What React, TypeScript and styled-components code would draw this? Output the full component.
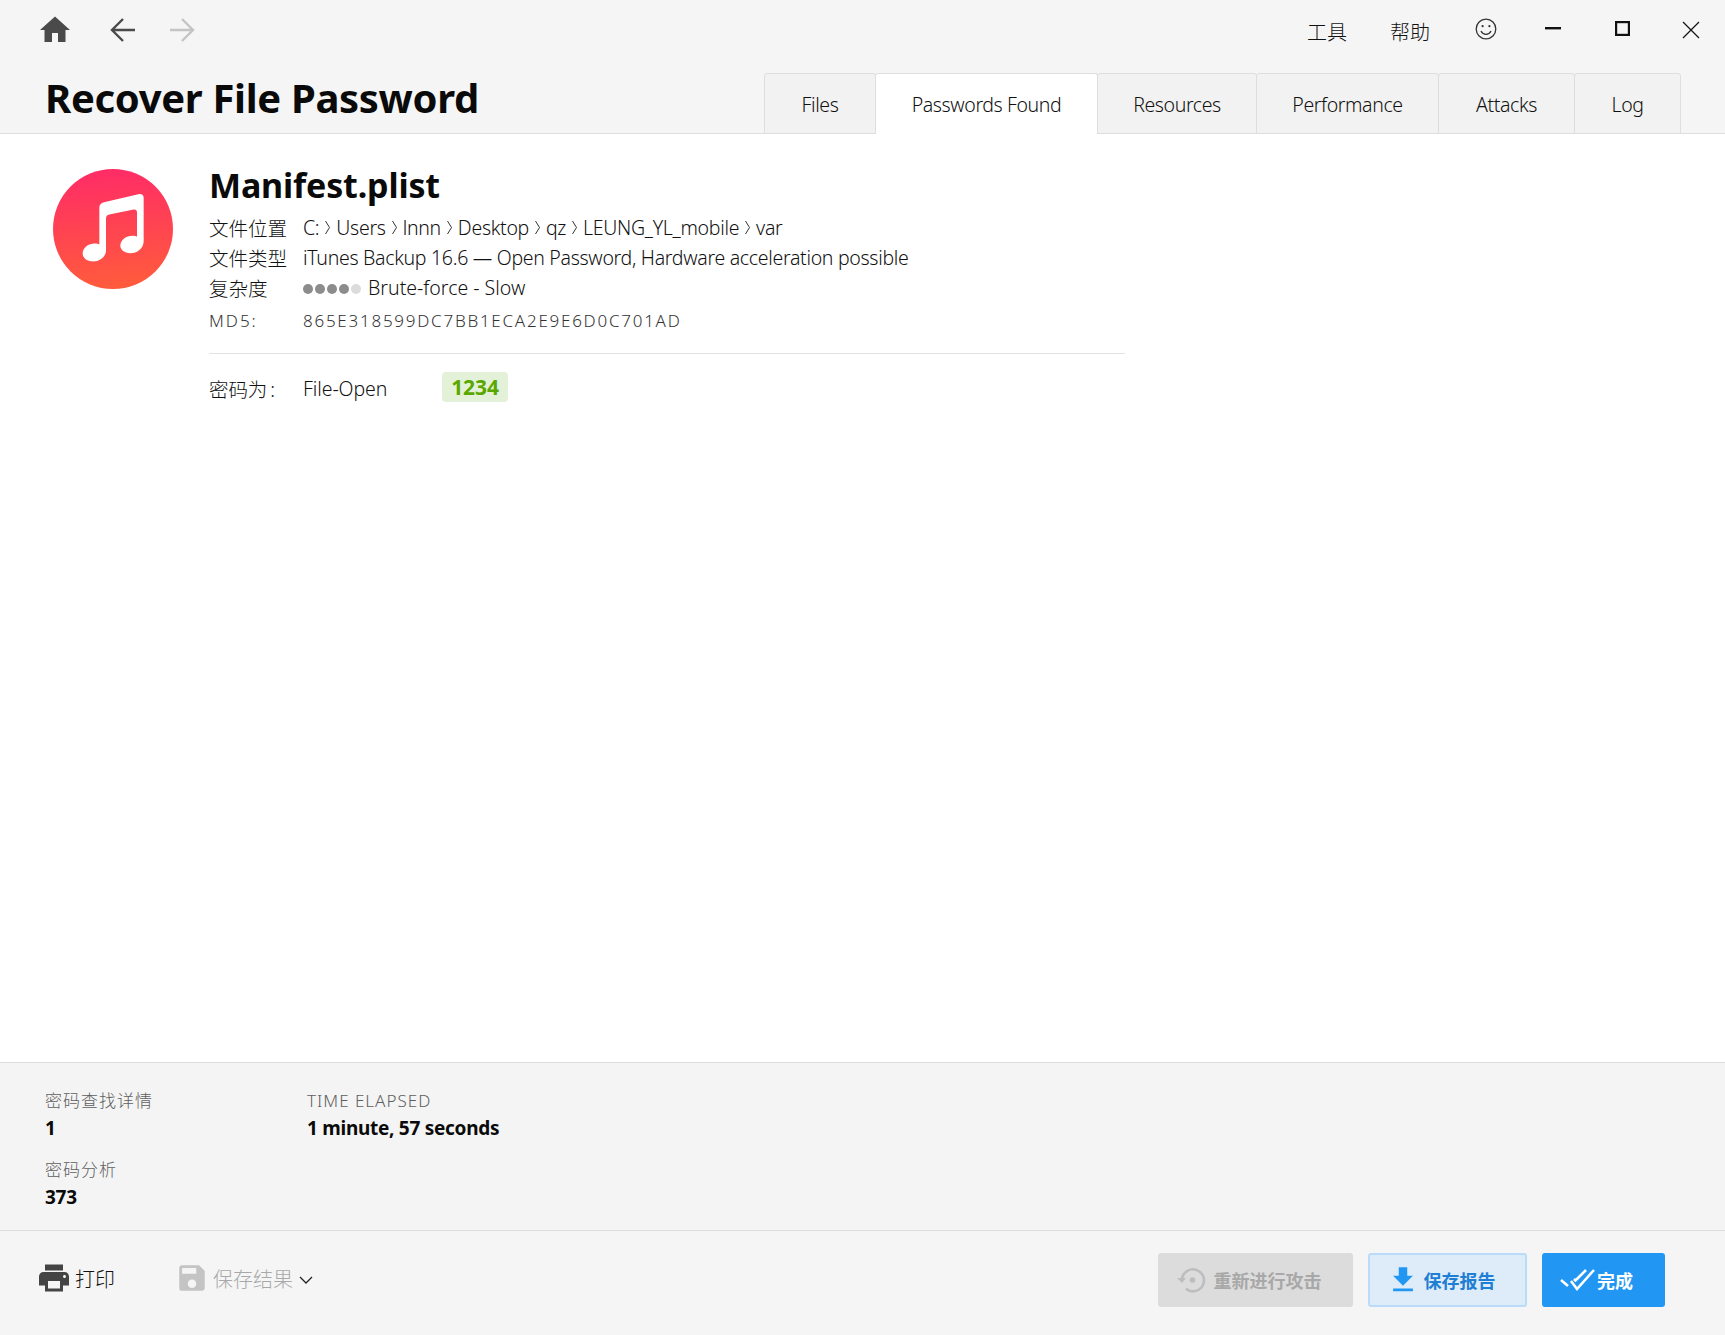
import { createGlobalStyle, styled } from "styled-components";
import { MdFileDownload, MdHome, MdPrint, MdSave } from "react-icons/md";

const GlobalStyle = createGlobalStyle`
    html, body {
        margin: 0;
        padding: 0;
        background: #fff;
    }
    body {
        font-family: "Noto Sans", "Noto Sans CJK SC", sans-serif;
        color: #1a1a1a;
    }
`;

const Page = styled.div`
    width: 1725px;
    height: 1335px;
    display: flex;
    flex-direction: column;
    overflow: hidden;
`;

const Header = styled.header`
    height: 134px;
    box-sizing: border-box;
    background: #f5f5f5;
    border-bottom: 1px solid #dedede;
    display: flex;
    flex-direction: column;
    flex: none;
`;

const TopBar = styled.div`
    height: 72px;
    flex: none;
    display: flex;
    align-items: center;
    padding: 0 25px 12px 40px;
    box-sizing: border-box;
`;

const NavGroup = styled.div`
    display: flex;
    align-items: center;
    flex: 1;
`;

const NavButton = styled.div<{ $gap?: number; $muted?: boolean }>`
    display: flex;
    margin-left: ${(p) => p.$gap ?? 0}px;
    color: ${(p) => (p.$muted ? "#c4c4c4" : "#4a4a4a")};
`;

const MenuItem = styled.span<{ $width: number }>`
    width: ${(p) => p.$width}px;
    font-size: 20px;
    font-weight: 300;
    color: #111;
    margin-top: 2px;
`;

const WindowButton = styled.div<{ $width: number; $lift?: number }>`
    width: ${(p) => p.$width}px;
    display: flex;
    color: #111;
    margin-bottom: ${(p) => p.$lift ?? 0}px;
`;

const TitleRow = styled.div`
    flex: 1;
    display: flex;
    align-items: flex-end;
    justify-content: space-between;
    padding: 0 45px 0 45px;
`;

const PageTitle = styled.h1`
    margin: 0 0 11px;
    font-size: 40px;
    line-height: 48px;
    font-weight: 700;
    color: #0a0a0a;
    letter-spacing: -0.32px;
`;

const Tabs = styled.nav`
    display: flex;
    height: 61px;
    margin-bottom: -1px;
`;

const Tab = styled.div<{ $width: number; $active?: boolean }>`
    width: ${(p) => p.$width}px;
    box-sizing: border-box;
    display: flex;
    align-items: center;
    justify-content: center;
    padding-top: 1px;
    font-size: 19.5px;
    font-weight: 300;
    letter-spacing: -0.4px;
    color: #111;
    background: ${(p) => (p.$active ? "#fff" : "#f2f2f2")};
    border: 1px solid #dedede;
    border-bottom: ${(p) => (p.$active ? "none" : "1px solid #dedede")};
    border-radius: 3px 3px 0 0;
    margin-right: -1px;
    position: relative;
    z-index: ${(p) => (p.$active ? 1 : 0)};
`;

const Content = styled.main`
    flex: 1;
    background: #fff;
    display: flex;
    gap: 36px;
    padding: 35px 0 0 53px;
`;

const AppIcon = styled.div`
    width: 120px;
    height: 120px;
    border-radius: 50%;
    background: linear-gradient(175deg, #ff2a68 0%, #ff5e3a 100%);
    display: flex;
    align-items: center;
    justify-content: center;
    flex: none;
`;

const Details = styled.section`
    width: 916px;
    margin-top: -5px;
`;

const FileName = styled.h2`
    margin: 0 0 6px;
    font-size: 34px;
    line-height: 42px;
    font-weight: 700;
    color: #0a0a0a;
    letter-spacing: -0.16px;
`;

const InfoRow = styled.div`
    display: grid;
    grid-template-columns: 94px 1fr;
    align-items: center;
    height: 30px;
    font-size: 19.5px;
    font-weight: 300;
    color: #111;
    letter-spacing: -0.3px;
`;

const InfoLabel = styled.span`
    letter-spacing: 0;
`;

const Crumb = styled.span`
    display: inline-flex;
    align-items: center;
    gap: 6px;
`;

const Complexity = styled.span`
    letter-spacing: 0;
`;

const Dots = styled.span`
    display: inline-flex;
    gap: 2px;
    margin-right: 7px;
    vertical-align: 1px;
`;

const Dot = styled.i<{ $on: boolean }>`
    width: 10px;
    height: 10px;
    border-radius: 50%;
    background: ${(p) => (p.$on ? "#8c8c8c" : "#dcdcdc")};
`;

const HashRow = styled(InfoRow)`
    font-size: 17px;
    letter-spacing: 1.75px;
    color: #333;
    margin-top: 3px;
`;

const HashLabel = styled.span`
    letter-spacing: 2px;
`;

const Divider = styled.hr`
    border: none;
    border-top: 1px solid #e2e2e2;
    margin: 18px 0 17px;
`;

const PasswordRow = styled.div`
    display: grid;
    grid-template-columns: 94px 139px auto;
    justify-content: start;
    align-items: center;
    height: 30px;
    font-size: 19.5px;
    font-weight: 300;
    color: #111;
    letter-spacing: -0.08px;
`;

const PasswordText = styled.span`
    padding-top: 3px;
`;

const Colon = styled.span`
    margin-left: 3px;
`;

const PasswordBadge = styled.span`
    width: 66px;
    height: 30px;
    border-radius: 4px;
    background: #e4f1d9;
    color: #5aa700;
    font-weight: 700;
    font-size: 21px;
    display: flex;
    align-items: center;
    justify-content: center;
`;

const Stats = styled.section`
    height: 169px;
    flex: none;
    box-sizing: border-box;
    background: #f4f4f4;
    border-top: 1px solid #dedede;
    border-bottom: 1px solid #dedede;
    padding: 23px 45px 0;
    display: grid;
    grid-template-columns: 262px 1fr;
    grid-auto-rows: 69px;
`;

const Stat = styled.div`
    display: flex;
    flex-direction: column;
`;

const StatLabel = styled.span`
    height: 29px;
    line-height: 30px;
    font-size: 17px;
    font-weight: 300;
    color: #5e5e5e;
    letter-spacing: 1px;
`;

const StatValue = styled.span`
    line-height: 26px;
    font-size: 19px;
    font-weight: 700;
    color: #0a0a0a;
    letter-spacing: -0.28px;
`;

const ActionBar = styled.footer`
    height: 104px;
    flex: none;
    box-sizing: border-box;
    background: #f5f5f5;
    display: flex;
    align-items: center;
    padding: 0 60px 6px 36px;
`;

const TextAction = styled.div<{ $disabled?: boolean; $gap?: number; $iconGap: number }>`
    display: flex;
    align-items: center;
    gap: ${(p) => p.$iconGap}px;
    margin-left: ${(p) => p.$gap ?? 0}px;
    margin-bottom: 4px;
    font-size: 20px;
    font-weight: 300;
    color: ${(p) => (p.$disabled ? "#a8a8a8" : "#111")};

    svg {
        color: ${(p) => (p.$disabled ? "#c4c4c4" : "#444")};
    }
`;

const Chevron = styled.svg`
    margin-left: 2px;
    margin-top: 3px;
`;

const ButtonGroup = styled.div`
    margin-left: auto;
    display: flex;
    gap: 15px;
`;

const Button = styled.div<{ $kind: "disabled" | "outline" | "primary"; $width: number; $gap: number }>`
    width: ${(p) => p.$width}px;
    height: 54px;
    box-sizing: border-box;
    border-radius: 3px;
    display: flex;
    align-items: center;
    justify-content: center;
    gap: ${(p) => p.$gap}px;
    padding-right: 14px;
    font-size: 18px;
    font-weight: 700;
    color: ${(p) => ({ disabled: "#a8a8a8", outline: "#1f7fd4", primary: "#fff" })[p.$kind]};
    background: ${(p) => ({ disabled: "#dcdcdc", outline: "#deecfa", primary: "#2196f3" })[p.$kind]};
    border: ${(p) => (p.$kind === "outline" ? "2px solid #b9dcfa" : "none")};
`;

const tabs = [
    { label: "Files", width: 112 },
    { label: "Passwords Found", width: 223, active: true },
    { label: "Resources", width: 160 },
    { label: "Performance", width: 183 },
    { label: "Attacks", width: 137 },
    { label: "Log", width: 107 },
];

const crumbs = ["C:", "Users", "lnnn", "Desktop", "qz", "LEUNG_YL_mobile", "var"];

const Arrow = ({ flip }: { flip?: boolean }) => (
    <svg width="25" height="26" viewBox="0 0 25 26" fill="none" stroke="currentColor" strokeWidth="2.400" style={flip ? { transform: "scaleX(-1)" } : undefined}>
        <path d="M13 2 2 13l11 11M2 13h23" />
    </svg>
);

const Smile = () => (
    <svg width="22" height="22" viewBox="0 0 22 22" fill="none" stroke="#333" strokeWidth="1.300">
        <circle cx="11" cy="11" r="9.800" />
        <path d="M6 13c1.200 2.400 3 3.400 5 3.400s3.800-1 5-3.400" />
        <circle cx="7.600" cy="8.200" r="1.100" fill="#333" stroke="none" />
        <circle cx="14.400" cy="8.200" r="1.100" fill="#333" stroke="none" />
    </svg>
);

const MusicNote = () => (
    <svg width="65" height="75" viewBox="150 125 195 224">
        <path
            fill="#fff"
            d="M205 172q0-14 14-17L322 131q16-3 16 12V272c0 22-20 36-40 36c-18 0-30-10-30-22c0-18 18-30 36-30c6 0 11 1 14 3V186q0-10-10-9L235 192q-10 2-10 12V300c0 18-18 33-38 33c-18 0-32-10-32-24c0-18 18-30 36-30c6 0 11 1 14 3z"
        />
    </svg>
);

const DoubleCheck = () => (
    <svg width="36" height="24" viewBox="0 0 36 24" fill="none" stroke="#fff" strokeWidth="2.600">
        <path d="M1 12l7 6M11 13l6 8L34 2" />
        <path d="M14 11l1.500 1.500L26 2" />
    </svg>
);

const RetryIcon = () => (
    <svg width="30" height="30" viewBox="0 0 30 30" fill="none" stroke="#bdbdbd" strokeWidth="2.600">
        <path d="M6 15a11 11 0 1 1 4 8.800" />
        <path d="M1 13l5 5 4-5" fill="#bdbdbd" stroke="none" />
        <circle cx="16.500" cy="15" r="2.800" fill="#bdbdbd" stroke="none" />
    </svg>
);

const App = () => {
    return (
        <Page>
            <GlobalStyle />
            <Header>
                <TopBar>
                    <NavGroup>
                        <NavButton>
                            <MdHome size={36} style={{ margin: "-3px" }} />
                        </NavButton>
                        <NavButton $gap={40}>
                            <Arrow />
                        </NavButton>
                        <NavButton $gap={35} $muted>
                            <Arrow flip />
                        </NavButton>
                    </NavGroup>
                    <MenuItem $width={83}>工具</MenuItem>
                    <MenuItem $width={85}>帮助</MenuItem>
                    <WindowButton $width={70} $lift={2}>
                        <Smile />
                    </WindowButton>
                    <WindowButton $width={70} $lift={4}>
                        <svg width="16" height="3" viewBox="0 0 16 3">
                            <rect width="16" height="2.400" fill="currentColor" />
                        </svg>
                    </WindowButton>
                    <WindowButton $width={67} $lift={4}>
                        <svg width="15" height="15" viewBox="0 0 15 15" fill="none" stroke="currentColor" strokeWidth="2.200">
                            <rect x="1.100" y="1.100" width="12.800" height="12.800" />
                        </svg>
                    </WindowButton>
                    <WindowButton $width={18}>
                        <svg width="18" height="18" viewBox="0 0 18 18" fill="none" stroke="currentColor" strokeWidth="1.200">
                            <path d="M1 1l16 16M17 1 1 17" />
                        </svg>
                    </WindowButton>
                </TopBar>
                <TitleRow>
                    <PageTitle>Recover File Password</PageTitle>
                    <Tabs>
                        {tabs.map((tab) => (
                            <Tab key={tab.label} $width={tab.width} $active={tab.active}>
                                {tab.label}
                            </Tab>
                        ))}
                    </Tabs>
                </TitleRow>
            </Header>
            <Content>
                <AppIcon>
                    <MusicNote />
                </AppIcon>
                <Details>
                    <FileName>Manifest.plist</FileName>
                    <InfoRow>
                        <InfoLabel>文件位置</InfoLabel>
                        <Crumb>
                            {crumbs.map((crumb, i) => (
                                <Crumb key={crumb}>
                                    {crumb}
                                    {i < crumbs.length - 1 && (
                                        <svg width="5" height="15" viewBox="0 0 5 15" fill="none" stroke="#333" strokeWidth="1">
                                            <path d="M.5 1l4 6.500-4 6.500" />
                                        </svg>
                                    )}
                                </Crumb>
                            ))}
                        </Crumb>
                    </InfoRow>
                    <InfoRow>
                        <InfoLabel>文件类型</InfoLabel>
                        <span>iTunes Backup 16.6 — Open Password, Hardware acceleration possible</span>
                    </InfoRow>
                    <InfoRow>
                        <InfoLabel>复杂度</InfoLabel>
                        <Complexity>
                            <Dots>
                                {[true, true, true, true, false].map((on, i) => (
                                    <Dot key={i} $on={on} />
                                ))}
                            </Dots>
                            Brute-force - Slow
                        </Complexity>
                    </InfoRow>
                    <HashRow>
                        <HashLabel>MD5:</HashLabel>
                        <span>865E318599DC7BB1ECA2E9E6D0C701AD</span>
                    </HashRow>
                    <Divider />
                    <PasswordRow>
                        <PasswordText>
                            密码为<Colon>:</Colon>
                        </PasswordText>
                        <PasswordText>File-Open</PasswordText>
                        <PasswordBadge>1234</PasswordBadge>
                    </PasswordRow>
                </Details>
            </Content>
            <Stats>
                <Stat>
                    <StatLabel>密码查找详情</StatLabel>
                    <StatValue>1</StatValue>
                </Stat>
                <Stat>
                    <StatLabel>TIME ELAPSED</StatLabel>
                    <StatValue>1 minute, 57 seconds</StatValue>
                </Stat>
                <Stat>
                    <StatLabel>密码分析</StatLabel>
                    <StatValue>373</StatValue>
                </Stat>
            </Stats>
            <ActionBar>
                <TextAction $iconGap={3}>
                    <MdPrint size={36} />
                    打印
                </TextAction>
                <TextAction $disabled $gap={60} $iconGap={4}>
                    <MdSave size={34} />
                    保存结果
                    <Chevron width="14" height="8" viewBox="0 0 14 8" fill="none" stroke="#222" strokeWidth="1.300">
                        <path d="M1 1l6 6 6-6" />
                    </Chevron>
                </TextAction>
                <ButtonGroup>
                    <Button $kind="disabled" $width={195} $gap={8}>
                        <RetryIcon />
                        重新进行攻击
                    </Button>
                    <Button $kind="outline" $width={159} $gap={4}>
                        <MdFileDownload size={34} style={{ color: "#2196f3" }} />
                        保存报告
                    </Button>
                    <Button $kind="primary" $width={123} $gap={1}>
                        <DoubleCheck />
                        完成
                    </Button>
                </ButtonGroup>
            </ActionBar>
        </Page>
    );
};

export default App;
